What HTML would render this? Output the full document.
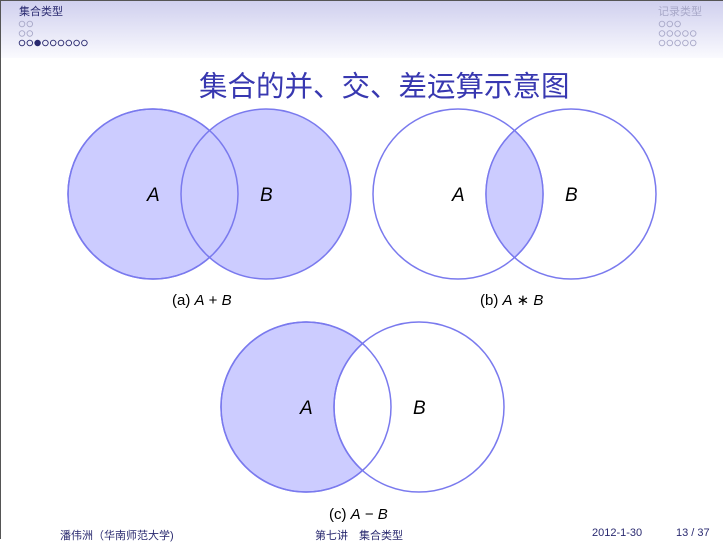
<!DOCTYPE html>
<html><head><meta charset="utf-8"><style>
html,body{margin:0;padding:0}
body{width:723px;height:539px;position:relative;overflow:hidden;background:#fff;font-family:"Liberation Sans","Noto Sans CJK SC",sans-serif}
.hdr{position:absolute;left:0;top:0;width:723px;height:58px;background:linear-gradient(#cfcfee,#fafafe)}
.t{position:absolute;white-space:nowrap}
</style></head><body>
<div class="hdr"></div>
<div style="position:absolute;left:0;top:0;width:723px;height:1px;background:#555"></div>
<div style="position:absolute;left:0;top:0;width:1px;height:539px;background:#555"></div>
<div class="t" style="left:19px;top:3px;font-size:11px;color:#2a2a70">集合类型</div>
<div class="t" style="left:658px;top:3px;font-size:11px;color:#a8a8c8">记录类型</div>
<svg width="723" height="60" style="position:absolute;left:0;top:0" fill="none" stroke-width="0.9">
<g stroke="#a8a8c8">
<circle cx="22" cy="24" r="2.8"/><circle cx="29.8" cy="24" r="2.8"/>
<circle cx="22" cy="33.5" r="2.8"/><circle cx="29.8" cy="33.5" r="2.8"/>
</g>
<g stroke="#2a2a70">
<circle cx="22" cy="43" r="2.8"/><circle cx="29.8" cy="43" r="2.8"/><circle cx="37.6" cy="43" r="2.8" fill="#2a2a70"/>
<circle cx="45.4" cy="43" r="2.8"/><circle cx="53.2" cy="43" r="2.8"/><circle cx="61" cy="43" r="2.8"/>
<circle cx="68.8" cy="43" r="2.8"/><circle cx="76.6" cy="43" r="2.8"/><circle cx="84.4" cy="43" r="2.8"/>
</g>
<g stroke="#a8a8c8">
<circle cx="662" cy="24" r="2.8"/><circle cx="669.8" cy="24" r="2.8"/><circle cx="677.6" cy="24" r="2.8"/>
<circle cx="662" cy="33.5" r="2.8"/><circle cx="669.8" cy="33.5" r="2.8"/><circle cx="677.6" cy="33.5" r="2.8"/><circle cx="685.4" cy="33.5" r="2.8"/><circle cx="693.2" cy="33.5" r="2.8"/>
<circle cx="662" cy="43" r="2.8"/><circle cx="669.8" cy="43" r="2.8"/><circle cx="677.6" cy="43" r="2.8"/><circle cx="685.4" cy="43" r="2.8"/><circle cx="693.2" cy="43" r="2.8"/>
</g>
</svg>
<div class="t" style="left:199px;top:64px;font-size:28.5px;color:#3838b0;font-family:'Noto Sans CJK SC',sans-serif">集合的并、交、差运算示意图</div>
<svg width="723" height="539" style="position:absolute;left:0;top:0">
<g stroke="#7a7aee" stroke-width="1.5">
<circle cx="153" cy="194" r="85" fill="#ccccff"/>
<circle cx="266" cy="194" r="85" fill="#ccccff"/>
<circle cx="153" cy="194" r="85" fill="none"/>
<circle cx="458" cy="194" r="85" fill="none"/>
<circle cx="571" cy="194" r="85" fill="none"/>
<path d="M514.5 130.5 A85 85 0 0 1 514.5 257.5 A85 85 0 0 1 514.5 130.5Z" fill="#ccccff"/>
<path d="M362.5 343.5 A85 85 0 1 0 362.5 470.5 A85 85 0 0 1 362.5 343.5Z" fill="#ccccff"/>
<circle cx="306" cy="407" r="85" fill="none"/>
<circle cx="419" cy="407" r="85" fill="none"/>
</g>
<g font-size="19" font-style="italic" fill="#000" font-family="Liberation Sans, sans-serif">
<text x="147" y="201">A</text><text x="260" y="201">B</text>
<text x="452" y="201">A</text><text x="565" y="201">B</text>
<text x="300" y="414">A</text><text x="413" y="414">B</text>
</g>
<g font-size="15" fill="#000" font-family="Liberation Sans, sans-serif">
<text x="172" y="305">(a) <tspan font-style="italic">A</tspan> + <tspan font-style="italic">B</tspan></text>
<text x="480" y="305">(b) <tspan font-style="italic">A</tspan> ∗ <tspan font-style="italic">B</tspan></text>
<text x="329" y="519">(c) <tspan font-style="italic">A</tspan> − <tspan font-style="italic">B</tspan></text>
</g>
</svg>
<div class="t" style="left:60px;top:527px;font-size:11px;color:#2a2a70">潘伟洲（华南师范大学)</div>
<div class="t" style="left:315px;top:527px;font-size:11px;color:#2a2a70">第七讲　集合类型</div>
<div class="t" style="left:592px;top:527px;font-size:11px;color:#2a2a70">2012-1-30</div>
<div class="t" style="left:676px;top:527px;font-size:11px;color:#2a2a70">13 / 37</div>
</body></html>
